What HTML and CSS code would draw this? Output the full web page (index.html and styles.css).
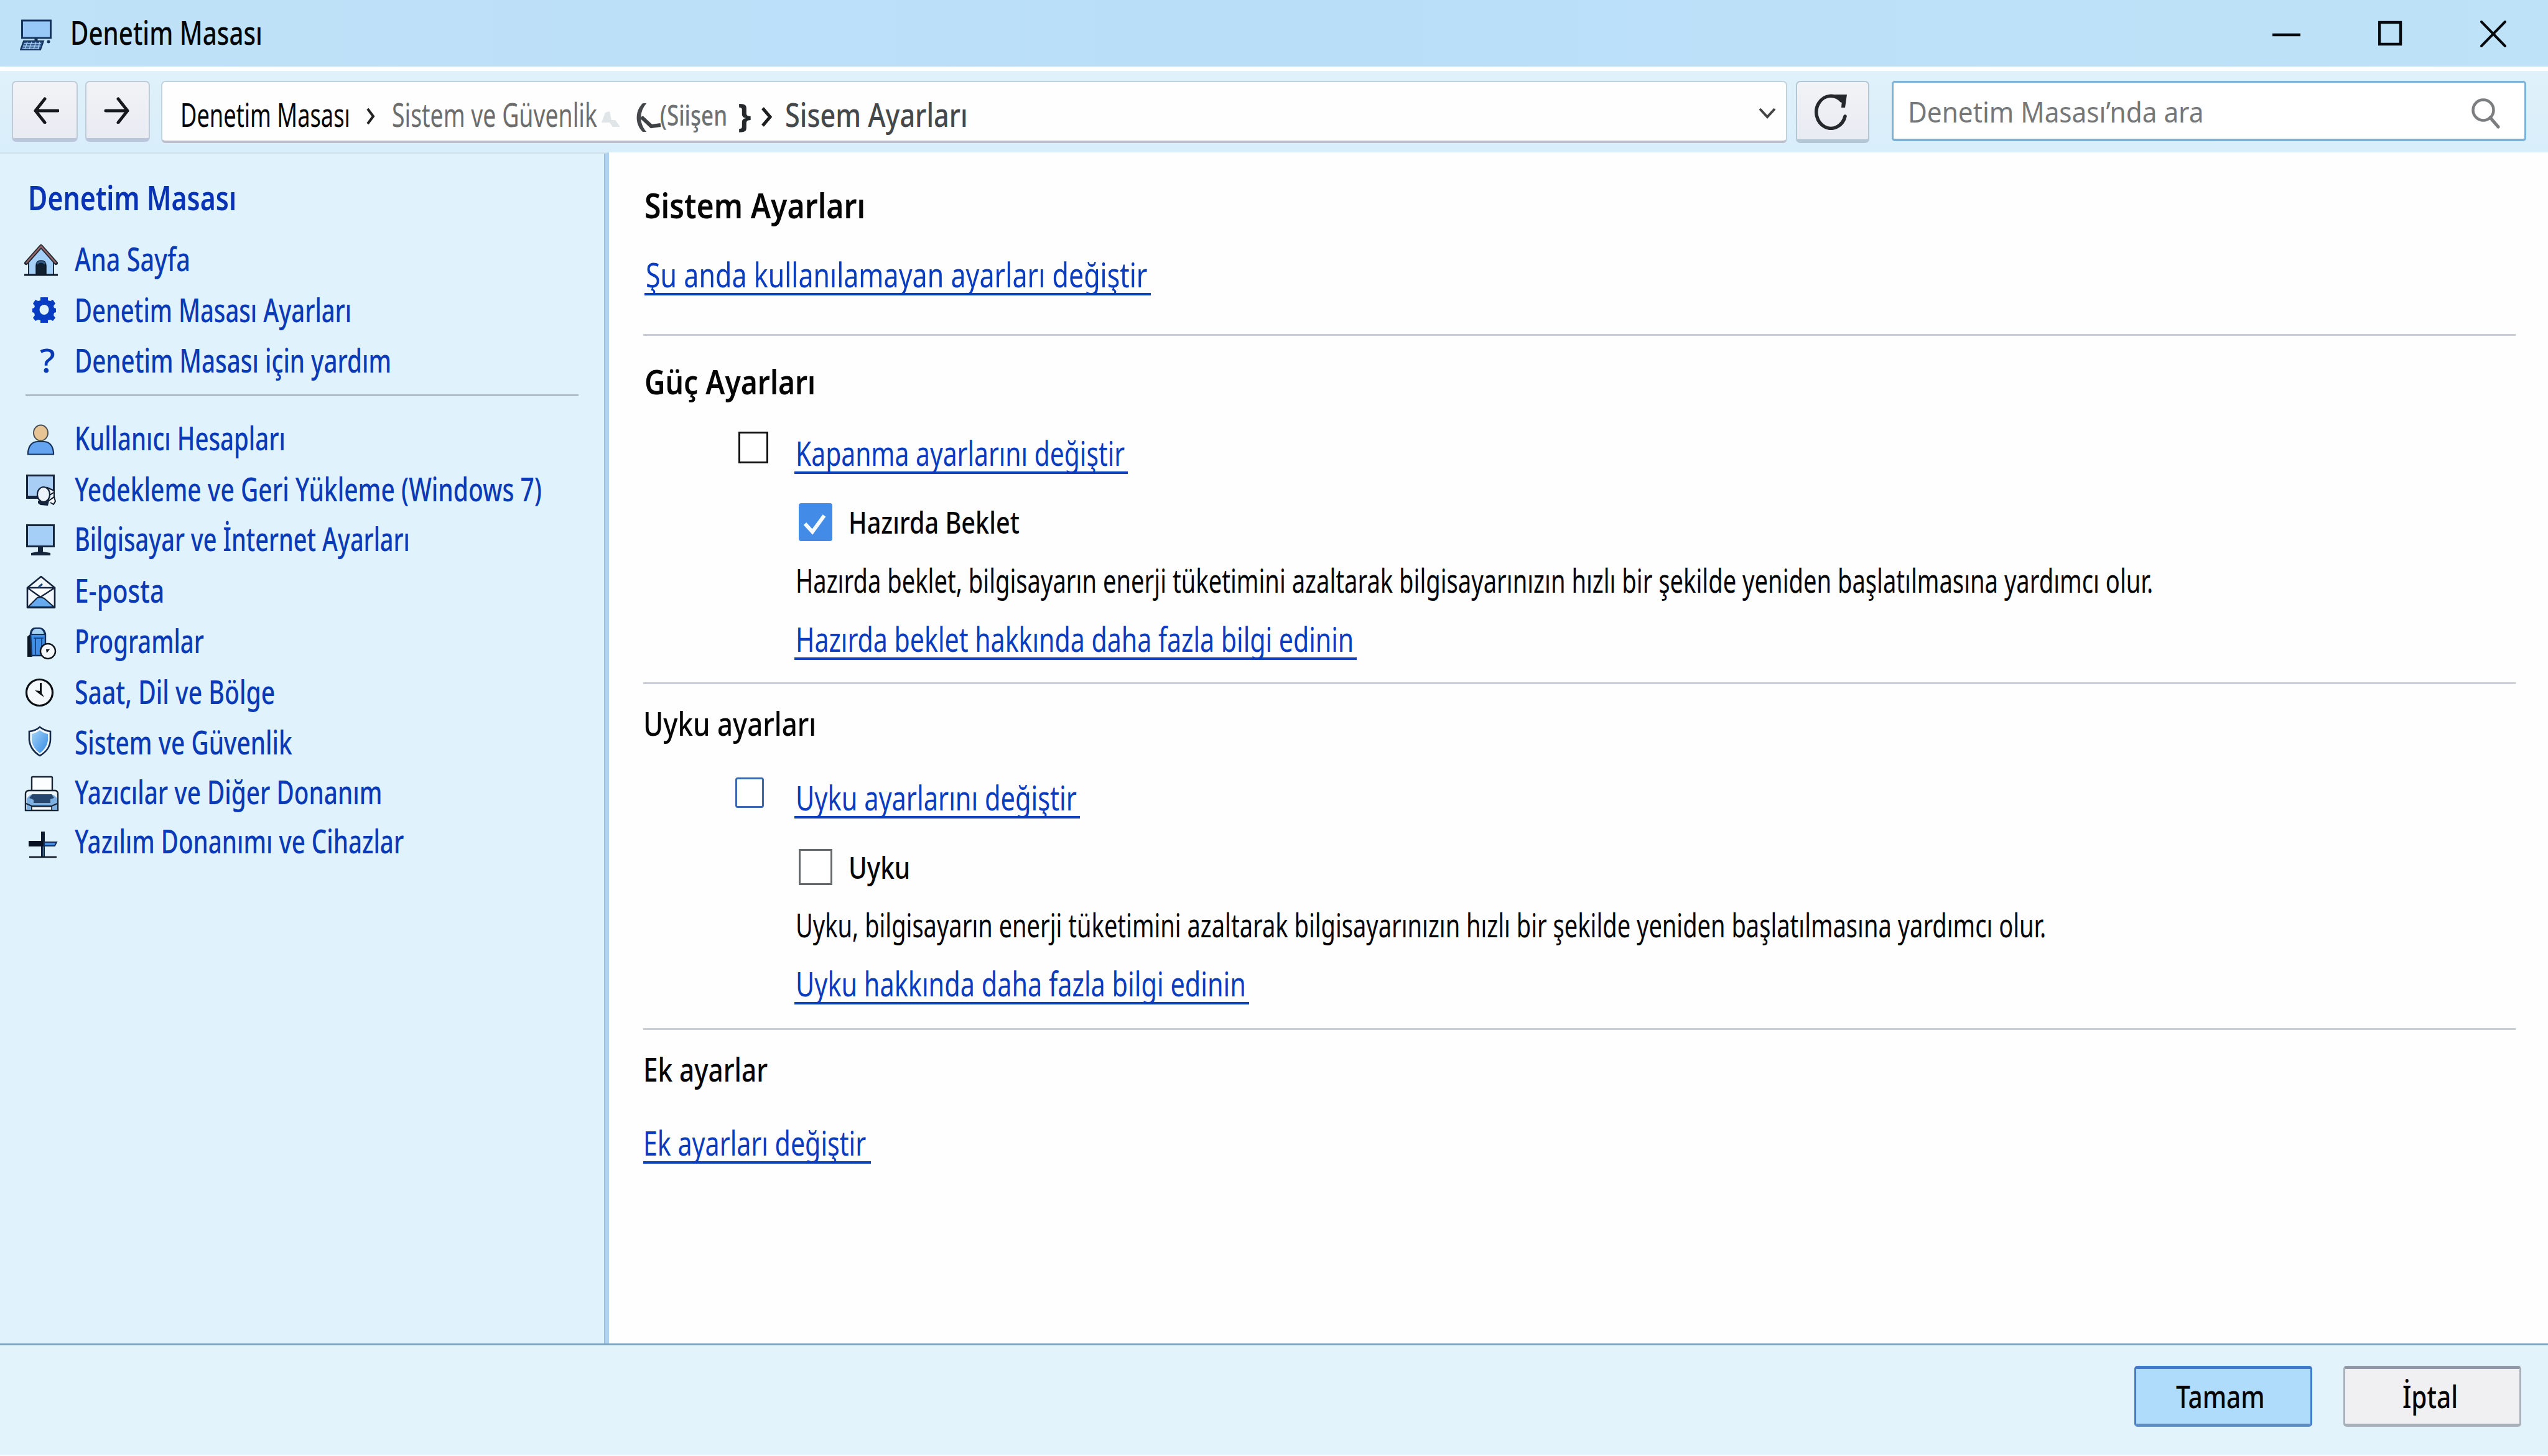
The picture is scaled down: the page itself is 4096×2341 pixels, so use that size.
FILE: index.html
```html
<!DOCTYPE html>
<html lang="tr">
<head>
  <meta charset="UTF-8">
  <meta name="viewport" content="width=device-width, initial-scale=1.0">
  <title>Denetim Masası</title>
  <link rel="stylesheet" href="styles.css">
</head>
<body>
  <div class="window">
    <header class="title-bar">
      <svg class="title-icon" width="56" height="52" viewBox="0 0 56 52">
        <rect x="3.500" y="2" width="46" height="28" fill="#98c8f8" stroke="#16355c" stroke-width="3"/>
        <path d="M26 30v6" stroke="#16355c" stroke-width="5"/>
        <path d="M6 35h32l-5 14H1z" fill="#2a5288" stroke="#16355c" stroke-width="2"/>
        <path d="M7 39h27M5 43h28M4 46.500h27M12 36l-4 12M19 36l-4 12M26 36l-4 12M32 36l-3 12" stroke="#a9cdf0" stroke-width="1.300"/>
        <circle cx="46" cy="36" r="2.500" fill="#16355c"/>
      </svg>
      <span class="title-text"><span class="fit" data-width="309">Denetim Masası</span></span>
      <div class="window-controls">
        <svg width="46" height="46" viewBox="0 0 46 46"><path d="M0 25h45" stroke="#05080c" stroke-width="4.500"/></svg>
        <svg width="40" height="46" viewBox="0 0 40 46"><rect x="2" y="5" width="34" height="35" fill="none" stroke="#05080c" stroke-width="4.500"/></svg>
        <svg width="42" height="46" viewBox="0 0 42 46"><path d="M2 4l38 39M40 4L2 43" stroke="#05080c" stroke-width="4" stroke-linecap="round"/></svg>
      </div>
    </header>

    <nav class="toolbar">
      <button class="nav-button back">
        <svg width="44" height="44" viewBox="0 0 44 44"><path d="M42 23H6M21 4L6 23l15 19" fill="none" stroke="#15181d" stroke-width="5" stroke-linecap="round" stroke-linejoin="round"/></svg>
      </button>
      <button class="nav-button forward">
        <svg width="44" height="44" viewBox="0 0 44 44"><path d="M3 23h35M23 4l15 19-15 19" fill="none" stroke="#15181d" stroke-width="5" stroke-linecap="round" stroke-linejoin="round"/></svg>
      </button>
      <div class="address-bar">
        <span class="crumb"><span class="fit" data-width="273">Denetim Masası</span></span>
        <svg class="crumb-arrow first" width="18" height="30" viewBox="0 0 18 30"><path d="M4 3l9 12-9 12" fill="none" stroke="#222" stroke-width="4"/></svg>
        <span class="crumb muted"><span class="fit" data-width="330">Sistem ve Güvenlik</span></span>
        <svg class="smudge" width="32" height="30" viewBox="0 0 32 30"><path d="M0 20L6 4l7-2 3 14 6 0 8 11H18L13 20z" fill="#e0e5e7"/></svg>
        <span class="crumb worn bracket"><span class="fit" data-width="20">(</span></span>
        <svg class="bracket-tail" width="34" height="22" viewBox="0 0 34 22"><path d="M1 1l16 15 15-2" fill="none" stroke="#3d4143" stroke-width="6"/></svg>
        <span class="crumb worn faded"><span class="fit" data-width="108">(Siişen</span></span>
        <span class="crumb worn brace"><span class="fit" data-width="22">}</span></span>
        <svg class="crumb-arrow last" width="20" height="34" viewBox="0 0 20 34"><path d="M3 3l12 14L3 31" fill="none" stroke="#1c1e20" stroke-width="5"/></svg>
        <span class="crumb worn"><span class="fit" data-width="294">Sisem Ayarları</span></span>
        <svg class="dropdown" width="30" height="20" viewBox="0 0 30 20"><path d="M3 3l12 13L27 3" fill="none" stroke="#444" stroke-width="4"/></svg>
      </div>
      <button class="nav-button refresh">
        <svg width="60" height="60" viewBox="0 0 60 60">
          <path d="M52 38A23.500 26 0 1 1 46 13" fill="none" stroke="#24282d" stroke-width="5.500" stroke-linecap="round"/>
          <path d="M35 3h20l-3 21-6 0 1-12z" fill="#24282d"/>
        </svg>
      </button>
      <div class="search-box">
        <span class="search-text"><span class="fit" data-width="475">Denetim Masası’nda ara</span></span>
        <svg width="48" height="50" viewBox="0 0 48 50"><circle cx="20" cy="20" r="16.500" fill="none" stroke="#7b7d7f" stroke-width="4.500"/><path d="M31 32l13 15" stroke="#7b7d7f" stroke-width="5" stroke-linecap="round"/></svg>
      </div>
    </nav>

    <div class="body">
      <aside class="sidebar">
        <div class="sidebar-title"><span class="fit" data-width="335">Denetim Masası</span></div>
        <ul class="side-list home-list">
          <li>
            <svg class="icon" viewBox="0 0 60 60">
              <path d="M8 31L28 13l20 18v26H8z" fill="#a4cff6" stroke="#1d2f45" stroke-width="2"/>
              <path d="M20 57V42q0-8 8-8t8 8v15z" fill="#10202f" stroke="#0c1826" stroke-width="1.500"/>
              <path d="M21 39q7-6 14 0" fill="none" stroke="#315b86" stroke-width="3"/>
              <path d="M4 38L28 11l24 27" fill="none" stroke="#232933" stroke-width="6" stroke-linejoin="round" stroke-linecap="round"/>
              <path d="M4 38L28 11l24 27" fill="none" stroke="#94686a" stroke-width="2.500"/>
              <path d="M1 57h54" stroke="#0c1826" stroke-width="3"/>
            </svg>
            <span class="fit" data-width="186">Ana Sayfa</span>
          </li>
          <li>
            <svg class="icon" viewBox="0 0 60 60">
              <path d="M27 11h12v5l4 1 4-2 4 6-3 4 1 3 3 1v6l-3 1-1 4 3 4-4 5-4-2-4 1v4H27v-4l-4-1-4 2-4-5 3-4-1-4-3-1v-6l3-1 1-3-3-4 4-6 4 2 4-1z" fill="#063bc2"/>
              <ellipse cx="33" cy="31" rx="7.500" ry="8" fill="#e0f2fb"/>
            </svg>
            <span class="fit" data-width="445">Denetim Masası Ayarları</span>
          </li>
          <li>
            <span class="icon question"><span class="fit" data-width="25">?</span></span>
            <span class="fit" data-width="509">Denetim Masası için yardım</span>
          </li>
        </ul>
        <hr class="side-rule">
        <ul class="side-list category-list">
          <li>
            <svg class="icon" viewBox="0 0 60 60">
              <ellipse cx="27.500" cy="23" rx="11.500" ry="12.500" fill="#e6c493" stroke="#4d5058" stroke-width="2"/>
              <path d="M7 57.500V54q2-16 15-17h11q13 1 15 17v3.500z" fill="#64a4f0" stroke="#17325f" stroke-width="2.200"/>
            </svg>
            <span class="fit" data-width="339">Kullanıcı Hesapları</span>
          </li>
          <li>
            <svg class="icon" viewBox="0 0 60 60">
              <rect x="5.500" y="9.500" width="43" height="35" fill="#a9cef6" stroke="#15243c" stroke-width="3"/>
              <path d="M4 44.500h22" stroke="#15243c" stroke-width="5"/>
              <path d="M38 29l11 5v18l-9-3z" fill="#e8f1f8" stroke="#101828" stroke-width="2"/>
              <path d="M39 43l9-6M42 49l7-5 2 7-3 5-5-3" fill="#f4f8fb" stroke="#101828" stroke-width="2"/>
              <path d="M23 50h18l-2 8-12-1-4-3z" fill="#15243c"/>
              <ellipse cx="32" cy="40" rx="10" ry="12" fill="#edf4fb" stroke="#15243c" stroke-width="2.200"/>
            </svg>
            <span class="fit" data-width="751">Yedekleme ve Geri Yükleme (Windows 7)</span>
          </li>
          <li>
            <svg class="icon" viewBox="0 0 60 60">
              <rect x="5.500" y="9.500" width="43" height="34" fill="#a5cff7" stroke="#14253c" stroke-width="3"/>
              <path d="M23 44h8v8l12 2v4H12v-4l11-2z" fill="#14253c"/>
            </svg>
            <span class="fit" data-width="539">Bilgisayar ve İnternet Ayarları</span>
          </li>
          <li>
            <svg class="icon" viewBox="0 0 60 60">
              <path d="M6 27L28 9l22 18v32H6z" fill="#f2f7fb" stroke="#15243c" stroke-width="2.600" stroke-linejoin="round"/>
              <path d="M7 58l15-15 5-1 6 2 16 14z" fill="#65abef" stroke="#15243c" stroke-width="2" stroke-linejoin="round"/>
              <path d="M6 27h44L27 42z" fill="#fbfdfe" stroke="#15243c" stroke-width="2.400" stroke-linejoin="round"/>
              <path d="M24 26l6-5" stroke="#1d4a80" stroke-width="3"/>
            </svg>
            <span class="fit" data-width="144">E-posta</span>
          </li>
          <li>
            <svg class="icon" viewBox="0 0 60 60">
              <path d="M7 25l6-5v36H7z" fill="#0c1623" stroke="#0c1623" stroke-width="2"/>
              <path d="M11 20q1-9 8-9h7q7 1 9 9v35H13z" fill="#3f8ee8" stroke="#14305c" stroke-width="2.400"/>
              <path d="M12 21q1-9 7-10h7q6 1 8 10z" fill="#a9d1f5" stroke="#14305c" stroke-width="2"/>
              <path d="M19 26v29M29 26v29M16 27h16" stroke="#14488f" stroke-width="2"/>
              <circle cx="39" cy="48" r="12" fill="#f5f8fa" stroke="#10151c" stroke-width="2.500"/>
              <path d="M36 45h6l-5 6z" fill="#10151c"/>
            </svg>
            <span class="fit" data-width="208">Programlar</span>
          </li>
          <li>
            <svg class="icon" viewBox="0 0 60 60">
              <circle cx="25.500" cy="32.500" r="21" fill="#f5f9fb" stroke="#0c0f13" stroke-width="3.200"/>
              <path d="M27.500 17v16" stroke="#0c0f13" stroke-width="3"/>
              <path d="M18 29l9 1 6 10-6-4z" fill="#0c0f13"/>
            </svg>
            <span class="fit" data-width="322">Saat, Dil ve Bölge</span>
          </li>
          <li>
            <svg class="icon" viewBox="0 0 60 60">
              <defs>
                <linearGradient id="shield" x1="0" y1="0" x2="1" y2="1">
                  <stop offset="0" stop-color="#a5d3f8"/>
                  <stop offset="1" stop-color="#338be4"/>
                </linearGradient>
              </defs>
              <path d="M26 7q8 6 17 7v14q-1 16-17 25Q11 44 9 28V14q10-1 17-7z" fill="#f2f8fc" stroke="#142a48" stroke-width="2.600"/>
              <path d="M26 12q6 5 13 6v11q-2 12-13 20-11-8-13-20V18q7-1 13-6z" fill="url(#shield)"/>
            </svg>
            <span class="fit" data-width="350">Sistem ve Güvenlik</span>
          </li>
          <li>
            <svg class="icon" viewBox="0 0 60 60">
              <rect x="13" y="7" width="33" height="24" rx="1.500" fill="#fcfdfe" stroke="#1b2634" stroke-width="2.400"/>
              <path d="M8 29h43q4 1 4 5v27H3V34q0-4 5-5z" fill="#eef5fb" stroke="#1b2634" stroke-width="2.400"/>
              <path d="M5 42q4-6 9-7h31q6 2 9 7v18H5z" fill="#7fb0e2"/>
              <path d="M14 35h31l4 6-6 2v6H16v-5l-7-3z" fill="#27466e"/>
              <path d="M4 50l9 4h32l9-4M13 54v7M45 54v7" fill="none" stroke="#1b2634" stroke-width="2"/>
              <rect x="13" y="55" width="32" height="5.500" fill="#f5f9fc" stroke="#1b2634" stroke-width="1.500"/>
            </svg>
            <span class="fit" data-width="494">Yazıcılar ve Diğer Donanım</span>
          </li>
          <li>
            <svg class="icon" viewBox="0 0 60 60">
              <path d="M28 16h6v41h-6z" fill="#0d1c30"/>
              <path d="M8 31h23v9H8z" fill="#071020"/>
              <path d="M33 33h20l-3 6H33z" fill="#4b8bdc" stroke="#14305c" stroke-width="2"/>
              <path d="M31.500 40v16" stroke="#4b7db8" stroke-width="1.500"/>
              <path d="M9 57h44" stroke="#0d1520" stroke-width="2.500"/>
            </svg>
            <span class="fit" data-width="529">Yazılım Donanımı ve Cihazlar</span>
          </li>
        </ul>
      </aside>

      <main class="content">
        <section class="section intro">
          <h1><span class="fit" data-width="355">Sistem Ayarları</span></h1>
          <a class="link"><span class="fit" data-width="807">Şu anda kullanılamayan ayarları değiştir</span></a>
        </section>

        <section class="section power">
          <h2><span class="fit" data-width="275">Güç Ayarları</span></h2>
          <div class="option">
            <span class="check dark"></span>
            <a class="link"><span class="fit" data-width="529">Kapanma ayarlarını değiştir</span></a>
          </div>
          <div class="sub-option">
            <span class="check checked">
              <svg width="53" height="60" viewBox="0 0 53 60"><path d="M10 33l12 13L41 20" fill="none" stroke="#f7fbff" stroke-width="6"/></svg>
            </span>
            <span class="label"><span class="fit" data-width="275">Hazırda Beklet</span></span>
          </div>
          <p><span class="fit" data-width="2182">Hazırda beklet, bilgisayarın enerji tüketimini azaltarak bilgisayarınızın hızlı bir şekilde yeniden başlatılmasına yardımcı olur.</span></p>
          <a class="link more"><span class="fit" data-width="897">Hazırda beklet hakkında daha fazla bilgi edinin</span></a>
        </section>

        <section class="section sleep">
          <h2><span class="fit" data-width="278">Uyku ayarları</span></h2>
          <div class="option">
            <span class="check blue"></span>
            <a class="link"><span class="fit" data-width="452">Uyku ayarlarını değiştir</span></a>
          </div>
          <div class="sub-option">
            <span class="check gray"></span>
            <span class="label"><span class="fit" data-width="99">Uyku</span></span>
          </div>
          <p><span class="fit" data-width="2010">Uyku, bilgisayarın enerji tüketimini azaltarak bilgisayarınızın hızlı bir şekilde yeniden başlatılmasına yardımcı olur.</span></p>
          <a class="link more"><span class="fit" data-width="724">Uyku hakkında daha fazla bilgi edinin</span></a>
        </section>

        <section class="section extra">
          <h2><span class="fit" data-width="200">Ek ayarlar</span></h2>
          <a class="link"><span class="fit" data-width="358">Ek ayarları değiştir</span></a>
        </section>
      </main>
    </div>

    <footer class="footer">
      <button class="button primary"><span class="fit" data-width="143">Tamam</span></button>
      <button class="button"><span class="fit" data-width="89">İptal</span></button>
    </footer>
  </div>
  <script src="fit.js"></script>
</body>
</html>
```
FILE: fit.js
```js
document.querySelectorAll('.fit').forEach(function (el) {
  const target = parseFloat(el.dataset.width);
  const natural = el.offsetWidth;
  el.style.transform = 'scaleX(' + target / natural + ')';
  el.style.marginRight = (target - natural) + 'px';
});
```
FILE: styles.css
```css
* {
  box-sizing: border-box;
}
body, html {
  margin: 0;
  padding: 0;
  height: 100%;
  overflow: hidden;
  font-family: "Noto Sans", "Open Sans", sans-serif;
  background: #fff;
  color: #050505;
}
button {
  font-family: inherit;
  color: inherit;
  margin: 0;
  padding: 0;
}
svg {
  display: block;
  flex: none;
}
.fit {
  display: inline-block;
  flex: none;
  white-space: nowrap;
  transform-origin: 0 50%;
}
.window {
  display: flex;
  flex-direction: column;
  width: 4096px;
  height: 2341px;
}

/* Title bar */
.title-bar {
  display: flex;
  align-items: flex-start;
  flex: none;
  height: 114px;
  padding: 31px 67px 0 32px;
  background: linear-gradient(90deg, #bfe2f8, #b9def8 50%, #bee3f8);
  border-bottom: 7px solid #fff;
}
.title-text {
  margin: -9px 0 0 25px;
  font-size: 52px;
  line-height: 60px;
  font-weight: 500;
}
.window-controls {
  display: flex;
  gap: 124px;
  margin-left: auto;
}

/* Toolbar */
.toolbar {
  display: flex;
  align-items: flex-start;
  flex: none;
  height: 131px;
  padding: 16px 35px 0 19px;
  background: linear-gradient(#e0f1fa, #d8eefa);
}
.nav-button {
  display: flex;
  align-items: center;
  justify-content: center;
  flex: none;
  width: 106px;
  height: 98px;
  background: linear-gradient(#f2f3f6, #e9ebf3);
  border: 2px solid #bfccd8;
  border-bottom: 6px solid #b9c6dc;
  border-radius: 7px;
}
.back {
  padding-left: 2px;
}
.forward {
  width: 104px;
  margin-left: 12px;
}
.address-bar {
  display: flex;
  align-items: flex-start;
  width: 2615px;
  height: 100px;
  margin-left: 18px;
  padding: 22px 15px 0 29px;
  background: #fefefe;
  border: 2px solid #c0d2dd;
  border-bottom: 4px solid #bdbfcd;
  border-radius: 7px;
}
.crumb {
  font-size: 52px;
  line-height: 60px;
}
.muted {
  color: #6c6c6c;
}
.crumb-arrow.first {
  margin: 18px 25px 0 24px;
}
.smudge {
  margin: 23px 22px 0 7px;
}
.worn {
  color: #44484a;
  font-weight: 500;
}
.bracket-tail {
  margin: 33px 0 0 -11px;
}
.faded {
  margin-left: -3px;
  font-size: 46px;
  color: #6d7173;
}
.brace {
  margin-left: 17px;
  color: #24282a;
  font-weight: 700;
}
.crumb-arrow.last {
  margin: 17px 19px 0 15px;
}
.dropdown {
  margin: 18px 0 0 auto;
}
.refresh {
  width: 118px;
  height: 100px;
  margin-left: 14px;
  padding: 2px 4px 0 0;
  border-color: #b3c6d3;
}
.search-box {
  display: flex;
  align-items: flex-start;
  justify-content: space-between;
  width: 1020px;
  height: 97px;
  margin-left: 36px;
  padding: 16px 38px 0 23px;
  background: #fff;
  border: 3px solid #7db1d6;
  border-bottom-width: 4px;
  border-radius: 5px;
}
.search-text {
  font-size: 46px;
  line-height: 60px;
  color: #757779;
}
.search-box svg {
  margin-top: 8px;
}

/* Body */
.body {
  display: flex;
  flex: none;
  height: 1915px;
}
.sidebar {
  flex: none;
  width: 979px;
  padding: 42px 0 0 38px;
  background: #e0f2fb;
  border-top: 2px solid #cfe0e8;
  border-right: 6px solid #b0d5f2;
  box-shadow: inset -2px 0 0 #a0bede;
}
.sidebar-title {
  margin: -2px 0 0 7px;
  font-size: 54px;
  line-height: 60px;
  font-weight: 600;
  color: #0833b4;
}
.side-list {
  display: grid;
  margin: 0;
  padding: 0;
  list-style: none;
  font-size: 53px;
  line-height: 62px;
  font-weight: 500;
  color: #0a3ab6;
}
.side-list li {
  display: flex;
  height: 60px;
}
.home-list {
  grid-template-rows: 82px 81px 60px;
  margin-top: 38px;
}
.category-list {
  grid-template-rows: 82px 80px 83px 81px 82px 81px 80px 79px 60px;
  margin-top: 36px;
}
.icon {
  width: 60px;
  height: 60px;
  margin-right: 22px;
  overflow: visible;
}
.question {
  flex: none;
  padding-left: 26px;
}
.side-rule {
  width: 889px;
  height: 3px;
  margin: 26px 0 0 3px;
  border: 0;
  background: #adbcc5;
}

/* Settings */
.content {
  flex: 1;
  padding: 54px 52px 0 55px;
  background: #fefefe;
}
.section {
  display: flex;
  flex-direction: column;
  align-items: flex-start;
}
.section + .section {
  border-top: 3px solid #cacdd6;
}
h1, h2 {
  margin: 0;
  font-size: 53px;
  line-height: 60px;
  font-weight: 600;
}
h1 {
  padding-left: 2px;
  font-size: 56px;
}
h2 {
  margin-top: 33px;
}
.power h2 {
  margin-top: 43px;
  padding-left: 2px;
  font-size: 55px;
}
.sleep h2, .extra h2 {
  font-weight: 550;
}
.link {
  display: flex;
  height: 64px;
  margin-bottom: -4px;
  padding: 0 5px 0 2px;
  border-bottom: 4px solid #0f41bb;
  font-size: 54px;
  line-height: 60px;
  font-weight: 450;
  color: #0a3cc0;
}
.intro .link {
  margin: 52px 0 62px 2px;
}
.option {
  display: flex;
  height: 60px;
  margin: 55px 0 0 153px;
}
.sleep .option {
  margin: 59px 0 0 148px;
}
.check {
  flex: none;
  background: #fff;
}
.dark {
  width: 48px;
  height: 51px;
  margin: -4px 42px 0 0;
  border: 3px solid #111;
}
.blue {
  width: 46px;
  height: 49px;
  margin: -2px 49px 0 0;
  border: 3px solid #3c69ae;
  border-radius: 4px;
}
.sub-option {
  display: flex;
  height: 60px;
  margin: 51px 0 0 250px;
}
.sleep .sub-option {
  margin-top: 52px;
}
.checked {
  width: 54px;
  height: 61px;
  border-radius: 4px;
  background: #428ce8;
}
.gray {
  width: 54px;
  height: 58px;
  margin-top: 1px;
  border: 3px solid #66696c;
}
.label {
  margin-left: 26px;
  font-size: 49px;
  line-height: 60px;
  font-weight: 500;
}
p {
  margin: 34px 0 0 245px;
  font-size: 52px;
  line-height: 60px;
}
.sleep p {
  margin-top: 33px;
}
.more {
  margin: 34px 0 36px 243px;
}
.sleep .more {
  margin-bottom: 38px;
}
.extra .link {
  margin-top: 58px;
  padding: 0 8px 0 0;
}

/* Footer */
.footer {
  display: flex;
  justify-content: flex-end;
  flex: none;
  gap: 50px;
  height: 181px;
  padding: 33px 43px 0 0;
  background: #e2f3fc;
  border-top: 3px solid #81a5bf;
  border-bottom: 2px solid #f8fbfd;
}
.button {
  width: 286px;
  height: 98px;
  padding: 0 6px 3px 0;
  background: #f0f0f2;
  border: 3px solid #a8b0ba;
  border-top: 5px solid #9099a6;
  border-bottom-width: 5px;
  border-radius: 5px;
  font-size: 51px;
  line-height: 60px;
  font-weight: 500;
}
.primary {
  padding-right: 9px;
  background: #afdcfb;
  border-color: #4279c8;
  border-bottom-color: #5d8ac8;
}
```
